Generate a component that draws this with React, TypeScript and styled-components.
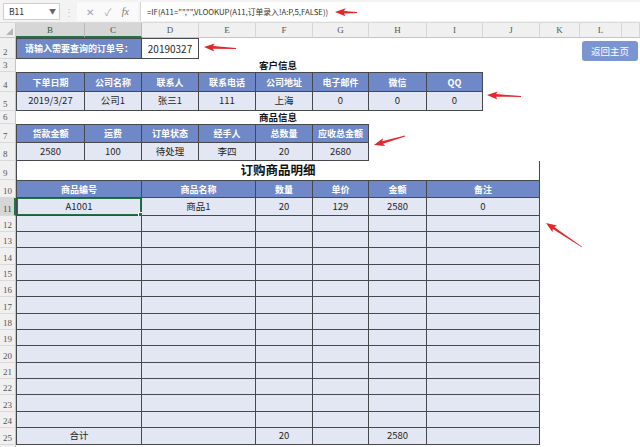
import styled, { createGlobalStyle } from "styled-components";

const LINE = "#46484e";
const HEAD_BLUE = "#6e88c8";
const DATA_BG = "#e3e7f3";
const GREEN = "#217346";

// widths of: row header, B, C, D, E, F, G, H, I, J, K, L (M takes the rest)
const COLS = [16, 69, 57, 57, 57, 57, 56, 58, 56, 57, 40, 42];
// heights of: column header row, then sheet rows 2..26
const ROWS = [15, 21, 13, 20, 19, 13, 19, 18, 19, 18, 18, 16, 16, 17, 16, 16, 17, 16, 16, 17, 16, 16, 17, 16, 17, 16];

const LETTERS = ["B", "C", "D", "E", "F", "G", "H", "I", "J", "K", "L", ""];

const customerHead = ["下单日期", "公司名称", "联系人", "联系电话", "公司地址", "电子邮件", "微信", "QQ"];
const customerRow = ["2019/3/27", "公司1", "张三1", "111", "上海", "0", "0", "0"];
const goodsHead = ["货款金额", "运费", "订单状态", "经手人", "总数量", "应收总金额"];
const goodsRow = ["2580", "100", "待处理", "李四", "20", "2680"];

const itemCols = [
  { label: "商品编号", c: 2, span: 2 },
  { label: "商品名称", c: 4, span: 2 },
  { label: "数量", c: 6, span: 1 },
  { label: "单价", c: 7, span: 1 },
  { label: "金额", c: 8, span: 1 },
  { label: "备注", c: 9, span: 2 },
];

const itemRows: string[][] = [["A1001", "商品1", "20", "129", "2580", "0"]];
for (let r = 12; r <= 24; r++) itemRows.push(["", "", "", "", "", ""]);
itemRows.push(["合计", "", "20", "", "2580", ""]);

const arrows = [
  { hx: 335, hy: 12, tx: 357, ty: 12.5 },
  { hx: 204, hy: 47, tx: 236, ty: 48.5 },
  { hx: 487, hy: 95, tx: 521, ty: 96.5 },
  { hx: 374, hy: 145, tx: 405, ty: 136 },
  { hx: 546, hy: 223, tx: 582, ty: 247 },
];

const arrowPoints = (hx: number, hy: number, tx: number, ty: number) => {
  const dx = tx - hx;
  const dy = ty - hy;
  const len = Math.hypot(dx, dy);
  const ux = dx / len;
  const uy = dy / len;
  const nx = -uy;
  const ny = ux;
  const L = 9;
  const W = 4;
  const S = 1.3;
  const T = 0.4;
  const n0 = hx + ux * L;
  const n1 = hy + uy * L;
  const back = 1.5;
  const pts = [
    [hx, hy],
    [n0 + nx * W + ux * back, n1 + ny * W + uy * back],
    [n0 + nx * S, n1 + ny * S],
    [tx + nx * T, ty + ny * T],
    [tx - nx * T, ty - ny * T],
    [n0 - nx * S, n1 - ny * S],
    [n0 - nx * W + ux * back, n1 - ny * W + uy * back],
  ];
  return pts.map((p) => p.map((v) => v.toFixed(1)).join(",")).join(" ");
};

const GlobalStyle = createGlobalStyle`
  html, body {
    margin: 0;
    padding: 0;
    background: #fff;
  }
  body {
    font-family: "Noto Sans CJK SC", "Liberation Sans", sans-serif;
  }
`;

const Window = styled.div`
  position: relative;
  width: 640px;
  height: 447px;
  display: flex;
  flex-direction: column;
  overflow: hidden;
  background: #fff;
`;

const FormulaBar = styled.div`
  height: 23px;
  flex: none;
  display: flex;
  align-items: center;
  background: #f3f3f3;
  border-bottom: 1px solid #dadada;
  box-sizing: border-box;
  padding-left: 3px;
`;

const NameBox = styled.div`
  width: 57px;
  height: 17px;
  box-sizing: border-box;
  display: flex;
  align-items: center;
  justify-content: space-between;
  padding: 0 3px 0 5px;
  background: #fff;
  border: 1px solid #cfcfcf;
  font-size: 8.5px;
  color: #333;
`;

const Caret = styled.span`
  font-size: 7px;
  color: #666;
`;

const Grip = styled.span`
  width: 17px;
  text-align: center;
  color: #c4c4c4;
  font-size: 10px;
`;

const FxGroup = styled.div`
  width: 61px;
  height: 19px;
  display: flex;
  align-items: center;
  justify-content: space-around;
  padding: 0 4px;
  box-sizing: border-box;
  background: #fafafa;
  color: #a2a2a2;
  font-size: 10px;
`;

const FxGlyph = styled.span`
  font-family: "Liberation Serif", serif;
  font-style: italic;
  font-size: 10px;
  color: #777;
`;

const FormulaInput = styled.div`
  flex: 1;
  height: 19px;
  margin-left: 2px;
  display: flex;
  align-items: center;
  padding-left: 6px;
  background: #fff;
  border-left: 1px solid #d6d6d6;
  font-size: 7.8px;
  color: #333;
  white-space: nowrap;
`;

const Sheet = styled.div`
  flex: 1;
  display: grid;
  grid-template-columns: ${COLS.map((n) => `${n}px`).join(" ")} 1fr;
  grid-template-rows: ${ROWS.map((n) => `${n}px`).join(" ")};
  overflow: hidden;
  background: #fff;
`;

const Corner = styled.div`
  grid-column: 1;
  grid-row: 1;
  display: flex;
  align-items: flex-end;
  justify-content: flex-end;
  padding: 0 2px 2px 0;
  background: #f0f0f0;
  border-right: 1px solid #cfcfcf;
  border-bottom: 1px solid #c4c4c4;
`;

const ColHead = styled.div<{ $c: number; $selected?: boolean }>`
  grid-column: ${(p) => p.$c};
  grid-row: 1;
  display: flex;
  align-items: center;
  justify-content: center;
  background: ${(p) => (p.$selected ? "#d6d6d6" : "#f0f0f0")};
  border-right: 1px solid ${(p) => (p.$selected ? "#b9b9b9" : "#d6d6d6")};
  border-bottom: ${(p) => (p.$selected ? `2px solid ${GREEN}` : "1px solid #c4c4c4")};
  font-family: "Liberation Serif", serif;
  font-size: 9px;
  color: ${(p) => (p.$selected ? "#1e5d38" : "#555")};
`;

const RowHead = styled.div<{ $r: number; $selected?: boolean }>`
  grid-column: 1;
  grid-row: ${(p) => p.$r};
  display: flex;
  align-items: flex-end;
  padding: 0 0 1px 3px;
  box-sizing: border-box;
  background: ${(p) => (p.$selected ? "#d6d6d6" : "#f0f0f0")};
  border-bottom: 1px solid #d9d9d9;
  border-right: ${(p) => (p.$selected ? `2px solid ${GREEN}` : "1px solid #c4c4c4")};
  font-family: "Liberation Serif", serif;
  font-size: 9px;
  line-height: 1;
  color: ${(p) => (p.$selected ? "#1e5d38" : "#555")};
`;

const Cell = styled.div<{ $c: number; $span?: number; $r: number; $bl?: boolean; $bt?: boolean }>`
  grid-column: ${(p) => p.$c} / span ${(p) => p.$span ?? 1};
  grid-row: ${(p) => p.$r};
  display: flex;
  align-items: center;
  justify-content: center;
  min-width: 0;
  box-sizing: border-box;
  white-space: nowrap;
  line-height: 1;
  border-right: 1px solid ${LINE};
  border-bottom: 1px solid ${LINE};
  border-left: ${(p) => (p.$bl ? `1px solid ${LINE}` : "none")};
  border-top: ${(p) => (p.$bt ? `1px solid ${LINE}` : "none")};
`;

const HeadCell = styled(Cell)`
  background: ${HEAD_BLUE};
  color: #fff;
  font-size: 9px;
  font-weight: 700;
`;

const DataCell = styled(Cell)<{ $selected?: boolean }>`
  position: relative;
  background: ${DATA_BG};
  color: #1f1f1f;
  font-size: 9.5px;
  box-shadow: ${(p) => (p.$selected ? `inset 0 0 0 1px ${GREEN}` : "none")};
`;

const FillHandle = styled.span`
  position: absolute;
  right: -3px;
  bottom: -3px;
  width: 4px;
  height: 4px;
  background: ${GREEN};
  border: 1px solid #fff;
`;

const QueryLabel = styled(Cell)`
  background: ${HEAD_BLUE};
  color: #fff;
  font-size: 9px;
  font-weight: 700;
`;

const QueryInput = styled(Cell)`
  background: #fff;
  color: #1f1f1f;
  font-size: 10px;
`;

const SectionTitle = styled.div<{ $r: number }>`
  grid-column: 2 / span 9;
  grid-row: ${(p) => p.$r};
  display: flex;
  align-items: center;
  justify-content: center;
  font-size: 9.5px;
  font-weight: 700;
  color: #111;
  line-height: 1;
`;

const TitleBox = styled(Cell)`
  background: #fff;
  font-size: 12.5px;
  font-weight: 700;
  color: #111;
  border-bottom: none;
`;

const HomeButton = styled.button`
  grid-column: 12 / span 2;
  grid-row: 2;
  align-self: start;
  width: 56px;
  height: 20px;
  margin: 3px 0 0 2px;
  padding: 0;
  border: none;
  border-radius: 3px;
  background: #7b94d2;
  color: #fff;
  font-family: "Noto Sans CJK SC", sans-serif;
  font-size: 9.5px;
`;

const Overlay = styled.svg`
  position: absolute;
  left: 0;
  top: 0;
  pointer-events: none;
`;

const App = () => {
  const sheetRows: number[] = [];
  for (let r = 2; r <= 26; r++) sheetRows.push(r);

  return (
    <Window>
      <GlobalStyle />
      <FormulaBar>
        <NameBox>
          <span>B11</span>
          <Caret>▼</Caret>
        </NameBox>
        <Grip>⋮</Grip>
        <FxGroup>
          <span>✕</span>
          <span>✓</span>
          <FxGlyph>fx</FxGlyph>
        </FxGroup>
        <FormulaInput>=IF(A11="","",VLOOKUP(A11,订单录入!A:P,5,FALSE))</FormulaInput>
      </FormulaBar>

      <Sheet>
        <Corner>
          <svg width="7" height="7" viewBox="0 0 7 7">
            <polygon points="7,0 7,7 0,7" fill="#b5b5b5" />
          </svg>
        </Corner>
        {LETTERS.map((l, i) => (
          <ColHead key={i} $c={i + 2} $selected={l === "B" || l === "C"}>
            {l}
          </ColHead>
        ))}
        {sheetRows.map((r) => (
          <RowHead key={r} $r={r} $selected={r === 11}>
            {r <= 25 ? r : ""}
          </RowHead>
        ))}

        <QueryLabel $c={2} $span={2} $r={2} $bl $bt>
          请输入需要查询的订单号：
        </QueryLabel>
        <QueryInput $c={4} $r={2} $bt>
          20190327
        </QueryInput>
        <HomeButton>返回主页</HomeButton>

        <SectionTitle $r={3}>客户信息</SectionTitle>
        {customerHead.map((h, i) => (
          <HeadCell key={h} $c={i + 2} $r={4} $bl={i === 0} $bt>
            {h}
          </HeadCell>
        ))}
        {customerRow.map((v, i) => (
          <DataCell key={i} $c={i + 2} $r={5} $bl={i === 0}>
            {v}
          </DataCell>
        ))}

        <SectionTitle $r={6}>商品信息</SectionTitle>
        {goodsHead.map((h, i) => (
          <HeadCell key={h} $c={i + 2} $r={7} $bl={i === 0} $bt>
            {h}
          </HeadCell>
        ))}
        {goodsRow.map((v, i) => (
          <DataCell key={i} $c={i + 2} $r={8} $bl={i === 0}>
            {v}
          </DataCell>
        ))}

        <TitleBox $c={2} $span={9} $r={9} $bl>
          订购商品明细
        </TitleBox>
        {itemCols.map((col, i) => (
          <HeadCell key={col.label} $c={col.c} $span={col.span} $r={10} $bl={i === 0} $bt>
            {col.label}
          </HeadCell>
        ))}
        {itemRows.map((row, ri) =>
          row.map((v, ci) => {
            const r = ri + 11;
            const selected = r === 11 && ci === 0;
            return (
              <DataCell
                key={`${r}-${ci}`}
                $c={itemCols[ci].c}
                $span={itemCols[ci].span}
                $r={r}
                $bl={ci === 0}
                $selected={selected}
              >
                {v}
                {selected && <FillHandle />}
              </DataCell>
            );
          })
        )}
      </Sheet>

      <Overlay width="640" height="447" viewBox="0 0 640 447">
        {arrows.map((a, i) => (
          <polygon key={i} points={arrowPoints(a.hx, a.hy, a.tx, a.ty)} fill="#e5262b" />
        ))}
      </Overlay>
    </Window>
  );
};

export default App;
